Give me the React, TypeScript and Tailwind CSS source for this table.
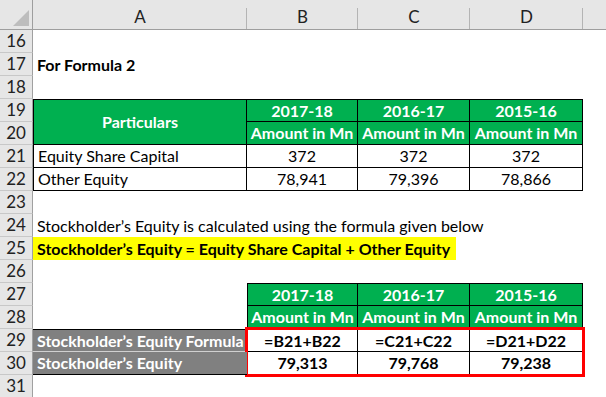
import React from 'react';

const font = "font-['Lato',sans-serif]";

const RowHead = ({ n }: { n: number }) => (
  <div className="flex items-center justify-center bg-[#e6e6e6] border-r border-b border-r-[#a0a0a0] border-b-[#c8c8c8] text-[17px] text-[#222]">
    {n}
  </div>
);

const ColHead = ({ label }: { label: string }) => (
  <div className="relative flex items-center justify-center pt-1 bg-[#e6e6e6] border-b border-[#9e9e9e] text-[17px] text-[#222] after:absolute after:right-0 after:top-2 after:bottom-0 after:w-px after:bg-[#b4b4b4]">
    {label}
  </div>
);

const Blank = ({ span = 1 }: { span?: number }) => (
  <div className={span === 5 ? 'col-span-5' : ''} />
);

const years = ['2017-18', '2016-17', '2015-16'];

export default function App() {
  return (
    <div className={`h-[397px] w-[606px] overflow-hidden bg-white text-black ${font}`}>
      <div className="grid grid-cols-[33px_214px_111px_112px_113px_1fr] grid-rows-[30px_repeat(16,23px)] text-[16px]">
        {/* column headers */}
        <div className="relative bg-[#e6e6e6] border-r border-b border-[#9e9e9e]">
          <svg className="absolute right-[3px] bottom-[3px]" width="16" height="16" viewBox="0 0 16 16">
            <polygon points="16,0 16,16 0,16" fill="#bdbdbd" />
          </svg>
        </div>
        <ColHead label="A" />
        <ColHead label="B" />
        <ColHead label="C" />
        <ColHead label="D" />
        <div className="bg-[#e6e6e6] border-b border-[#9e9e9e]" />

        {/* 16 */}
        <RowHead n={16} />
        <Blank span={5} />

        {/* 17 */}
        <RowHead n={17} />
        <div className="col-span-5 flex items-center pl-1 font-bold">For Formula 2</div>

        {/* 18 */}
        <RowHead n={18} />
        <Blank span={5} />

        {/* 19 */}
        <RowHead n={19} />
        <div className="row-span-2 flex items-center justify-center bg-[#00b050] border border-black text-white font-bold">
          Particulars
        </div>
        {years.map((y) => (
          <div key={y} className="flex items-center justify-center bg-[#00b050] border-t border-r border-b border-black text-white font-bold">
            {y}
          </div>
        ))}
        <Blank />

        {/* 20 */}
        <RowHead n={20} />
        {years.map((y) => (
          <div key={y} className="flex items-center justify-center bg-[#00b050] border-r border-b border-black text-white font-bold whitespace-nowrap">
            Amount in Mn
          </div>
        ))}
        <Blank />

        {/* 21 */}
        <RowHead n={21} />
        <div className="flex items-center pl-1 border-l border-r border-b border-black">Equity Share Capital</div>
        {['372', '372', '372'].map((v, i) => (
          <div key={i} className="flex items-center justify-center border-r border-b border-black">{v}</div>
        ))}
        <Blank />

        {/* 22 */}
        <RowHead n={22} />
        <div className="flex items-center pl-1 border-l border-r border-b border-black">Other Equity</div>
        {['78,941', '79,396', '78,866'].map((v, i) => (
          <div key={i} className="flex items-center justify-center border-r border-b border-black">{v}</div>
        ))}
        <Blank />

        {/* 23 */}
        <RowHead n={23} />
        <Blank span={5} />

        {/* 24 */}
        <RowHead n={24} />
        <div className="col-span-5 flex items-center pl-1 whitespace-nowrap">
          Stockholder’s Equity is calculated using the formula given below
        </div>

        {/* 25 */}
        <RowHead n={25} />
        <div className="col-span-5 flex">
          <div className="flex items-center pl-1 pr-[6px] bg-[#ffff00] font-bold whitespace-nowrap">
            Stockholder’s Equity = Equity Share Capital + Other Equity
          </div>
        </div>

        {/* 26 */}
        <RowHead n={26} />
        <Blank span={5} />

        {/* 27 */}
        <RowHead n={27} />
        <Blank />
        {years.map((y, i) => (
          <div key={y} className={`flex items-center justify-center bg-[#00b050] border-t border-r border-b border-black text-white font-bold ${i === 0 ? 'border-l' : ''}`}>
            {y}
          </div>
        ))}
        <Blank />

        {/* 28 */}
        <RowHead n={28} />
        <Blank />
        {years.map((y, i) => (
          <div key={y} className={`flex items-center justify-center bg-[#00b050] border-r border-b border-black text-white font-bold whitespace-nowrap ${i === 0 ? 'border-l' : ''}`}>
            Amount in Mn
          </div>
        ))}
        <Blank />

        {/* 29 */}
        <RowHead n={29} />
        <div className="flex items-center pl-1 bg-[#808080] border-t border-black border-b border-b-[#d0d0d0] text-white font-bold whitespace-nowrap">
          Stockholder’s Equity Formula
        </div>
        <div className="col-span-3 row-span-2 -mx-[2px] -my-[2px] border-[3px] border-[#ff0000] grid grid-cols-[110px_112px_1fr] grid-rows-2 font-bold">
          {['=B21+B22', '=C21+C22', '=D21+D22'].map((v, i) => (
            <div key={v} className={`flex items-center justify-center border-b border-black ${i < 2 ? 'border-r' : ''}`}>{v}</div>
          ))}
          {['79,313', '79,768', '79,238'].map((v, i) => (
            <div key={v} className={`flex items-center justify-center border-black ${i < 2 ? 'border-r' : ''}`}>{v}</div>
          ))}
        </div>
        <Blank />

        {/* 30 */}
        <RowHead n={30} />
        <div className="flex items-center pl-1 bg-[#808080] border-b border-black text-white font-bold">
          Stockholder’s Equity
        </div>
        <Blank />

        {/* 31 */}
        <RowHead n={31} />
        <Blank span={5} />
      </div>
    </div>
  );
}
